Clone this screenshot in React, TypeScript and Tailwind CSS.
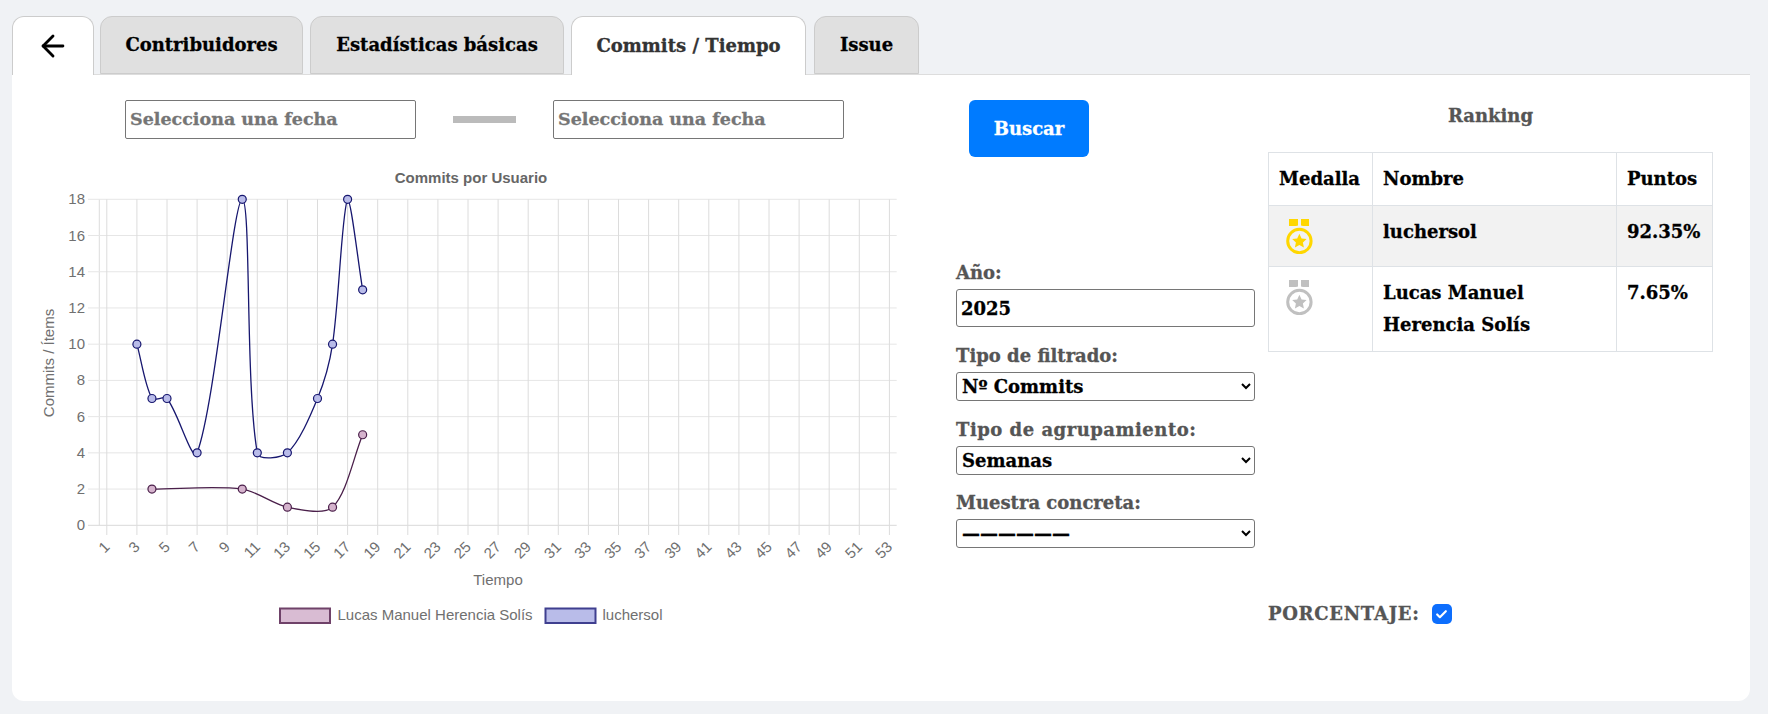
import { ArrowLeft, Check } from "lucide-react";

// chart area, in page pixels (the svg viewBox uses page coordinates)
const LEFT = 99.3;
const RIGHT = 896.7;
const TOP = 199.3;
const BOTTOM = 525.3;

const xOf = (week: number) => 106.8 + (week - 1) * 15.05;
const yOf = (n: number) => BOTTOM - (n / 18) * (BOTTOM - TOP);

const series = [
    {
        name: "Lucas Manuel Herencia Solís",
        line: "#4a1f4a",
        dot: "#d5b3cd",
        points: [[4, 2], [10, 2], [13, 1], [16, 1], [18, 5]],
    },
    {
        name: "luchersol",
        line: "#17176f",
        dot: "#b9bce9",
        points: [[3, 10], [4, 7], [5, 7], [7, 4], [10, 18], [11, 4], [13, 4], [15, 7], [16, 10], [17, 18], [18, 13]],
    },
];

const clamp = (v: number, lo: number, hi: number) => Math.min(hi, Math.max(lo, v));

// same spline a line chart uses, tension read off the picture
function curve(points: number[][]) {
    const pts = points.map(([w, n]) => ({ x: xOf(w), y: yOf(n) }));
    const cps = pts.map((cur, i) => {
        const prev = pts[i - 1] ?? cur;
        const next = pts[i + 1] ?? cur;
        const d01 = Math.hypot(cur.x - prev.x, cur.y - prev.y);
        const d12 = Math.hypot(next.x - cur.x, next.y - cur.y);
        const total = d01 + d12 || 1;
        const fa = (0.3 * d01) / total;
        const fb = (0.3 * d12) / total;
        return {
            inX: clamp(cur.x - fa * (next.x - prev.x), LEFT, RIGHT),
            inY: clamp(cur.y - fa * (next.y - prev.y), TOP, BOTTOM),
            outX: clamp(cur.x + fb * (next.x - prev.x), LEFT, RIGHT),
            outY: clamp(cur.y + fb * (next.y - prev.y), TOP, BOTTOM),
        };
    });
    let d = `M${pts[0].x} ${pts[0].y}`;
    for (let i = 1; i < pts.length; i++) {
        d += ` C${cps[i - 1].outX} ${cps[i - 1].outY} ${cps[i].inX} ${cps[i].inY} ${pts[i].x} ${pts[i].y}`;
    }
    return d;
}

const weeks = Array.from({ length: 27 }, (_, i) => i * 2 + 1);
const counts = [0, 2, 4, 6, 8, 10, 12, 14, 16, 18];

function Chart() {
    return (
        <svg
            viewBox="20 165 900 475"
            className="ml-2 mt-[26px] block h-[475px] w-[900px] font-['Liberation_Sans',Arial,sans-serif] font-normal [-webkit-text-stroke:0]"
        >
            <text x="471" y="183" textAnchor="middle" fontSize="15" fontWeight="700" fill="#666">
                Commits por Usuario
            </text>

            <line x1={LEFT} x2={LEFT} y1={TOP} y2={BOTTOM} stroke="#dcdcdc" />
            {counts.map((n) => (
                <g key={n}>
                    <line x1="88" x2={RIGHT} y1={yOf(n)} y2={yOf(n)} stroke={n === 0 ? "#d9d9d9" : "#e6e6e6"} />
                    <text x="85" y={yOf(n) + 5} textAnchor="end" fontSize="15" fill="#707070">
                        {n}
                    </text>
                </g>
            ))}
            {weeks.map((w) => (
                <g key={w}>
                    <line x1={xOf(w)} x2={xOf(w)} y1={TOP} y2="535" stroke="#dcdcdc" />
                    <text
                        transform={`translate(${xOf(w) + 1} 545) rotate(-45)`}
                        textAnchor="end"
                        dominantBaseline="middle"
                        fontSize="15"
                        fill="#707070"
                    >
                        {w}
                    </text>
                </g>
            ))}

            <text transform="translate(54 363) rotate(-90)" textAnchor="middle" fontSize="15" fill="#707070">
                Commits / Ítems
            </text>
            <text x="498" y="585" textAnchor="middle" fontSize="15" fill="#707070">
                Tiempo
            </text>

            {series.map((s) => (
                <g key={s.name}>
                    <path d={curve(s.points)} fill="none" stroke={s.line} strokeWidth="1.3" />
                    {s.points.map(([w, n]) => (
                        <circle key={w} cx={xOf(w)} cy={yOf(n)} r="4" fill={s.dot} stroke={s.line} strokeWidth="1.2" />
                    ))}
                </g>
            ))}

            <rect x="280" y="608.5" width="50" height="14.5" fill="#d9bcd3" stroke="#6f4269" strokeWidth="2" />
            <text x="337.5" y="620" fontSize="15" fill="#707070">
                Lucas Manuel Herencia Solís
            </text>
            <rect x="545.5" y="608.5" width="50" height="14.5" fill="#b9bce9" stroke="#3f3f8f" strokeWidth="2" />
            <text x="602.5" y="620" fontSize="15" fill="#707070">
                luchersol
            </text>
        </svg>
    );
}

function Medal({ color }: { color: string }) {
    return (
        <svg viewBox="0 0 27 35" className="mb-[2px] ml-[7px] mt-[3px] block h-[35px] w-[27px]">
            <path d="M3 0h9v6.5l-2 0.5H3z" fill={color} />
            <path d="M15 0h8v7h-6l-2-0.5z" fill={color} />
            <circle cx="13.4" cy="22" r="11.7" fill="none" stroke={color} strokeWidth="3" />
            <path
                d="M13.4 14.8l2.2 4.6 5 .6-3.7 3.4 1 5-4.5-2.5-4.5 2.5 1-5-3.7-3.4 5-.6z"
                fill={color}
            />
        </svg>
    );
}

function Tab({ label, width, active }: { label: string; width: string; active?: boolean }) {
    return (
        <button
            className={
                active
                    ? `relative z-10 -mb-px h-[59px] rounded-t-xl border border-b-0 border-[#ccc] bg-white text-[#333] ${width}`
                    : `h-[58px] rounded-t-xl border border-[#ccc] bg-[#e0e0e0] text-black ${width}`
            }
        >
            {label}
        </button>
    );
}

function Field({ label, value, options, labelClass }: { label: string; value?: string; options?: string[]; labelClass?: string }) {
    return (
        <div className="mt-[17px] first:mt-0 last:mt-4">
            <label className={`mb-1 block h-6 leading-6 text-[#555] ${labelClass ?? ""}`}>{label}</label>
            {options ? (
                <select className="block h-[29px] w-[299px] rounded-[3px] border border-[#767676] bg-white pl-px">
                    {options.map((o) => (
                        <option key={o}>{o}</option>
                    ))}
                </select>
            ) : (
                <input
                    defaultValue={value}
                    className="block h-[38px] w-[299px] rounded-[3px] border border-[#767676] px-[4px] text-black"
                />
            )}
        </div>
    );
}

const cell = "border border-[#dee2e6] p-2.5 align-top leading-8";

export default function App() {
    return (
        <div className="min-h-[714px] bg-[#f0f2f5] pl-3 pr-[18px] pt-4 font-['DejaVu_Serif',serif] text-[18px] font-bold leading-6 text-black [-webkit-text-stroke:0.3px]">
            <div className="flex items-end gap-[7px]">
                <button className="relative z-10 -mb-px -mr-px flex h-[59px] w-[82px] items-center justify-center rounded-t-xl border border-b-0 border-[#ccc] bg-white [-webkit-text-stroke:0]">
                    <ArrowLeft size={34} strokeWidth={2} />
                </button>
                <Tab label="Contribuidores" width="w-[203px]" />
                <Tab label="Estadísticas básicas" width="w-[254px]" />
                <Tab label="Commits / Tiempo" width="w-[235px]" active />
                <Tab label="Issue" width="ml-px w-[105px]" />
            </div>

            <main className="flex h-[627px] rounded-b-xl border-t border-[#ddd] bg-white pt-[25px]">
                <section className="w-[918px]">
                    <div className="ml-[113px] flex items-center">
                        <input
                            placeholder="Selecciona una fecha"
                            className="h-[39px] w-[291px] rounded-[2px] border border-[#767676] px-[4px] pb-0.5 text-[17.5px] placeholder:text-[#757575]"
                        />
                        <div className="mx-[37px] h-[7px] w-[63px] bg-[#bbb]" />
                        <input
                            placeholder="Selecciona una fecha"
                            className="h-[39px] w-[291px] rounded-[2px] border border-[#767676] px-[4px] pb-0.5 text-[17.5px] placeholder:text-[#757575]"
                        />
                    </div>
                    <Chart />
                </section>

                <section className="w-[338px] pl-[26px]">
                    <button className="ml-[13px] h-[57px] w-[120px] rounded-md bg-[#007bff] text-white">Buscar</button>
                    <div className="mt-[104px]">
                        <Field label="Año:" value="2025" />
                        <Field label="Tipo de filtrado:" options={["Nº Commits"]} />
                        <Field label="Tipo de agrupamiento:" options={["Semanas"]} labelClass="tracking-[0.5px]" />
                        <Field label="Muestra concreta:" options={["——————"]} />
                    </div>
                </section>

                <section className="w-[445px]">
                    <h2 className="pt-1 text-center leading-6 text-[#555]">Ranking</h2>
                    <table className="mt-6 w-[444px] table-fixed border-collapse">
                        <colgroup>
                            <col className="w-[104px]" />
                            <col className="w-[244px]" />
                            <col className="w-[96px]" />
                        </colgroup>
                        <thead>
                            <tr>
                                <th className={`${cell} text-left font-bold`}>Medalla</th>
                                <th className={`${cell} text-left font-bold`}>Nombre</th>
                                <th className={`${cell} text-left font-bold`}>Puntos</th>
                            </tr>
                        </thead>
                        <tbody>
                            <tr className="bg-[#f2f2f2]">
                                <td className={cell}>
                                    <Medal color="#ffd700" />
                                </td>
                                <td className={cell}>luchersol</td>
                                <td className={cell}>92.35%</td>
                            </tr>
                            <tr>
                                <td className={cell}>
                                    <Medal color="#c0c0c0" />
                                </td>
                                <td className={cell}>
                                    Lucas Manuel
                                    <br />
                                    Herencia Solís
                                </td>
                                <td className={cell}>7.65%</td>
                            </tr>
                        </tbody>
                    </table>
                    <div className="mt-[250px] flex items-center gap-3 text-[#555]">
                        <span className="tracking-[0.7px]">PORCENTAJE:</span>
                        <span className="flex h-5 w-5 items-center justify-center rounded-[5px] bg-[#0d6efd] text-white">
                            <Check size={13} strokeWidth={4} />
                        </span>
                    </div>
                </section>
            </main>
        </div>
    );
}
